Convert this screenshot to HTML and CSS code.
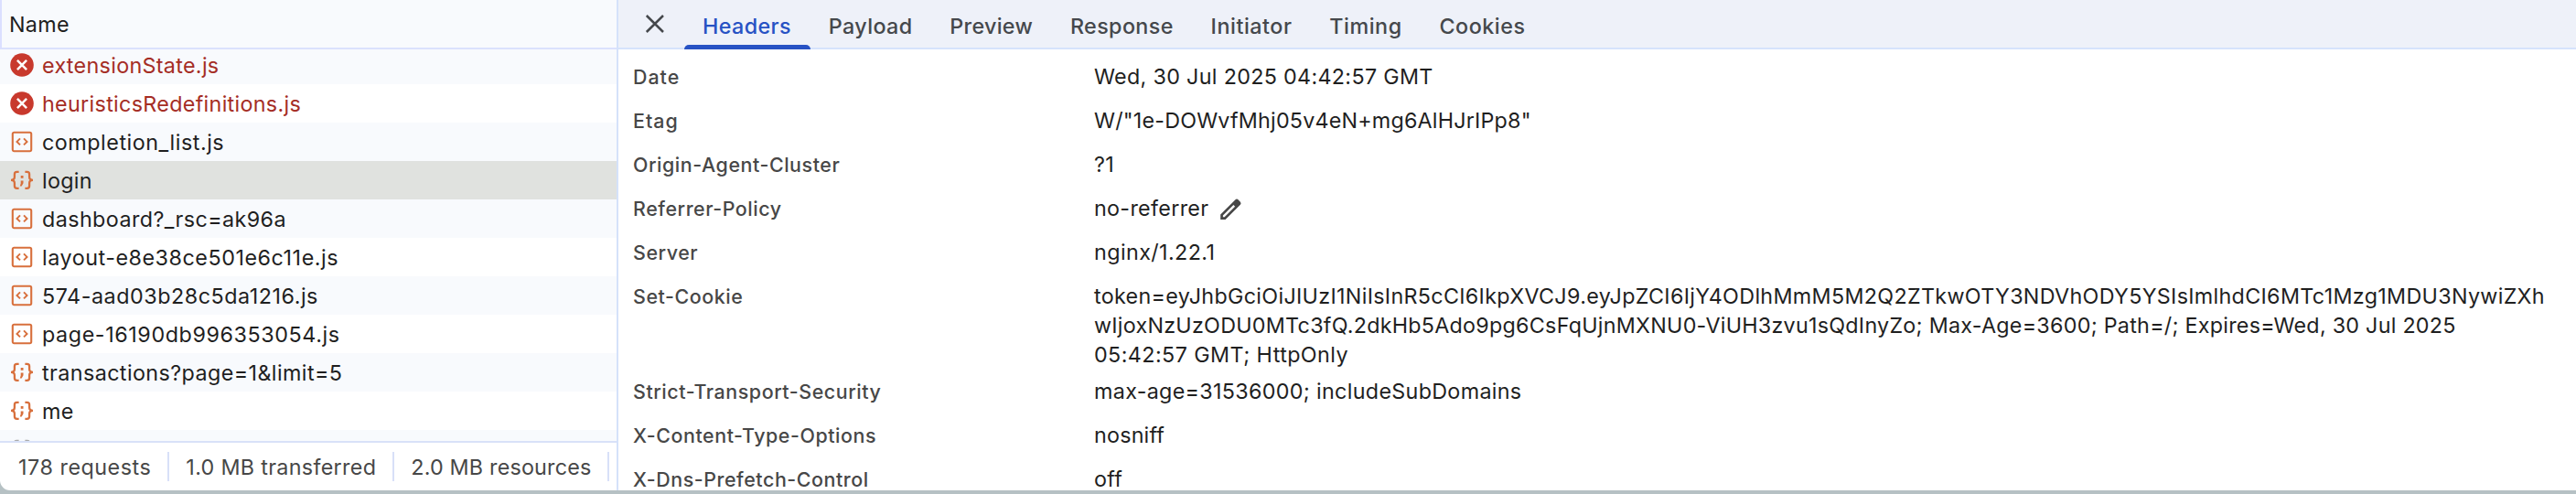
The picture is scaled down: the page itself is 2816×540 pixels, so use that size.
FILE: index.html
```html
<!DOCTYPE html>
<html lang="en">
<head>
  <meta charset="UTF-8">
  <meta name="viewport" content="width=device-width, initial-scale=1.0">
  <title>Network - DevTools</title>
  <link rel="stylesheet" href="styles.css">
</head>
<body>
  <!-- Icon definitions -->
  <svg class="defs" width="0" height="0">
    <symbol id="icon-error" viewBox="0 0 26 26">
      <circle cx="13" cy="13" r="12.8" fill="#c8392d"/>
      <path d="M7.9 7.9l10.2 10.2M18.1 7.9L7.9 18.1" stroke="#fff" stroke-width="2.5" fill="none"/>
    </symbol>
    <symbol id="icon-script" viewBox="0 0 26 26">
      <rect x="2.8" y="2.8" width="20.4" height="20.4" rx="1.6" stroke="currentColor" stroke-width="2.1" fill="none"/>
      <path d="M11 9.4L7.5 12.9l3.5 3.5M15 9.4l3.5 3.5-3.5 3.5" stroke="currentColor" stroke-width="2" fill="none"/>
    </symbol>
    <symbol id="icon-json" viewBox="0 0 26 26">
      <path d="M9.6 3.9H7.4Q4.9 3.9 4.9 6.4v3.2Q4.9 12.9 1 12.9q3.9 0 3.9 3.3v3.1q0 2.5 2.5 2.5h2.2M16.4 3.9h2.2q2.5 0 2.5 2.5v3.2q0 3.3 3.9 3.3-3.9 0-3.9 3.3v3.1q0 2.5-2.5 2.5h-2.2" stroke="currentColor" stroke-width="2.3" fill="none"/>
      <rect x="11.7" y="8" width="2.8" height="2.8" fill="currentColor"/>
      <path d="M11.7 13.6h2.8v2.6l-1.8 3.4h-1.9l.9-3z" fill="currentColor"/>
    </symbol>
  </svg>

  <div class="devtools">
    <div class="requests">
      <div class="requests-header">Name</div>
      <ul class="request-list">
        <li class="request failed"><svg class="icon"><use href="#icon-error"/></svg><span>extensionState.js</span></li>
        <li class="request failed"><svg class="icon"><use href="#icon-error"/></svg><span>heuristicsRedefinitions.js</span></li>
        <li class="request"><svg class="icon"><use href="#icon-script"/></svg><span class="loose">completion_list.js</span></li>
        <li class="request selected"><svg class="icon"><use href="#icon-json"/></svg><span>login</span></li>
        <li class="request"><svg class="icon"><use href="#icon-script"/></svg><span class="medium">dashboard?_rsc=ak96a</span></li>
        <li class="request"><svg class="icon"><use href="#icon-script"/></svg><span class="loose">layout-e8e38ce501e6c11e.js</span></li>
        <li class="request"><svg class="icon"><use href="#icon-script"/></svg><span class="loose">574-aad03b28c5da1216.js</span></li>
        <li class="request"><svg class="icon"><use href="#icon-script"/></svg><span class="looser">page-16190db996353054.js</span></li>
        <li class="request"><svg class="icon"><use href="#icon-json"/></svg><span class="medium">transactions?page=1&amp;limit=5</span></li>
        <li class="request"><svg class="icon"><use href="#icon-json"/></svg><span>me</span></li>
        <li class="request pending"><svg class="icon"><use href="#icon-json"/></svg></li>
      </ul>
      <div class="summary">
        <span class="summary-item loose">178 requests</span>
        <span class="summary-item">1.0 MB transferred</span>
        <span class="summary-item tight">2.0 MB resources</span>
      </div>
    </div>

    <div class="details">
      <div class="tabs">
        <button class="close" aria-label="Close">
          <svg width="24" height="24" viewBox="0 0 24 24">
            <path d="M2.8 3l18.2 18M21 3L2.8 21" stroke="#45484c" stroke-width="2.5" fill="none"/>
          </svg>
        </button>
        <div class="tab active">Headers</div>
        <div class="tab">Payload</div>
        <div class="tab preview">Preview</div>
        <div class="tab">Response</div>
        <div class="tab loose">Initiator</div>
        <div class="tab loose">Timing</div>
        <div class="tab loose">Cookies</div>
      </div>

      <div class="headers">
        <div class="header-row">
          <div class="header-name short">Date</div>
          <div class="header-value">Wed, 30 Jul 2025 04:42:57 GMT</div>
        </div>
        <div class="header-row">
          <div class="header-name short">Etag</div>
          <div class="header-value tight">W/"1e-DOWvfMhj05v4eN+mg6AlHJrIPp8"</div>
        </div>
        <div class="header-row">
          <div class="header-name">Origin-Agent-Cluster</div>
          <div class="header-value">?1</div>
        </div>
        <div class="header-row">
          <div class="header-name">Referrer-Policy</div>
          <div class="header-value editable">
            no-referrer
            <svg class="edit" width="26" height="26" viewBox="0 0 26 26">
              <path d="M2.2 24v-5.4L18.5 2.3q1.5-1.4 3 0l2.4 2.4q1.4 1.5 0 3L7.6 24zM4.9 21.3h1.7L18.1 9.8l-1.7-1.7L4.9 19.6z" fill="#474747" fill-rule="evenodd"/>
            </svg>
          </div>
        </div>
        <div class="header-row">
          <div class="header-name">Server</div>
          <div class="header-value medium">nginx/1.22.1</div>
        </div>
        <div class="header-row">
          <div class="header-name">Set-Cookie</div>
          <div class="header-value">
            token=eyJhbGciOiJIUzI1NiIsInR5cCI6IkpXVCJ9.eyJpZCI6IjY4ODlhMmM5M2Q2ZTkwOTY3NDVhODY5YSIsImlhdCI6MTc1Mzg1MDU3NywiZXh<br>
            <span class="snug">wIjoxNzUzODU0MTc3fQ.2dkHb5Ado9pg6CsFqUjnMXNU0-ViUH3zvu1sQdInyZo; Max-Age=3600; Path=/; Expires=Wed, 30 Jul 2025</span><br>
            <span class="medium">05:42:57 GMT; HttpOnly</span>
          </div>
        </div>
        <div class="header-row">
          <div class="header-name">Strict-Transport-Security</div>
          <div class="header-value">max-age=31536000; includeSubDomains</div>
        </div>
        <div class="header-row">
          <div class="header-name">X-Content-Type-Options</div>
          <div class="header-value tight">nosniff</div>
        </div>
        <div class="header-row">
          <div class="header-name">X-Dns-Prefetch-Control</div>
          <div class="header-value">off</div>
        </div>
      </div>
    </div>
  </div>
</body>
</html>
```
FILE: styles.css
```css
* {
  margin: 0;
  padding: 0;
  box-sizing: border-box;
}

body {
  font-family: Inter, Roboto, sans-serif;
  font-size: 23.3px;
  letter-spacing: 0.32px;
  color: #1f1f1f;
  background: #b6c1c4;
  height: 540px;
  overflow: hidden;
}

.defs {
  display: block;
}

.devtools {
  display: flex;
  height: 536px;
  background: #fff;
  border-bottom-left-radius: 11px;
  overflow: hidden;
}

/* Request list */
.requests {
  display: flex;
  flex-direction: column;
  width: 676px;
  flex-shrink: 0;
  border-right: 2px solid #d5e2fa;
}

.requests-header {
  height: 54px;
  flex-shrink: 0;
  line-height: 54px;
  padding-left: 8px;
  background: #f8fafd;
  border-left: 2px solid #dbdfff;
  border-bottom: 2px solid #dbe1fd;
}

.request-list {
  flex: 1;
  min-height: 0;
  list-style: none;
  overflow: hidden;
}

.request {
  display: flex;
  align-items: center;
  gap: 9px;
  height: 42px;
  padding-left: 11px;
  white-space: nowrap;
}

.request span {
  padding-top: 2px;
  line-height: 40px;
}

/* list is scrolled down a little */
.request:first-child {
  margin-top: -4px;
}

.request:nth-child(odd) {
  background: #f8fafd;
}

.request.selected {
  background: #e0e2df;
}

.request.failed {
  color: #a52d25;
}

.icon {
  width: 26px;
  height: 26px;
  flex-shrink: 0;
  color: #d8703d;
}

.pending .icon {
  color: #aaa;
}

.summary {
  display: flex;
  align-items: center;
  height: 54px;
  flex-shrink: 0;
  padding-left: 2px;
  color: #474747;
  border-top: 2px solid #d8e1f8;
}

.summary-item {
  height: 32px;
  line-height: 34px;
  padding: 0 18px;
  white-space: nowrap;
  border-right: 2px solid #d8e0f8;
}

/* Details pane */
.details {
  flex: 1;
  min-width: 0;
}

.tabs {
  display: flex;
  height: 54px;
  padding-left: 28px;
  background: #eef1f9;
  border-bottom: 2px solid #d5e3fc;
}

.close {
  display: flex;
  width: 44px;
  padding-top: 14px;
  border: none;
  background: none;
}

.tab {
  height: 54px;
  line-height: 58px;
  padding: 0 20.8px 0 20px;
  font-weight: 500;
  letter-spacing: 0.4px;
  color: #45484c;
}

.tab.active {
  position: relative;
  color: #2752c4;
}

.tab.active::after {
  content: "";
  position: absolute;
  left: 0;
  right: 0;
  bottom: 0;
  height: 5px;
  background: #2752c4;
  border-radius: 5px 5px 0 0;
}

.tab.preview {
  letter-spacing: 0.3px;
}

.headers {
  padding: 14px 0 0 16px;
  height: 482px;
  overflow: hidden;
}

.header-row {
  display: flex;
  min-height: 48px;
  padding-bottom: 8px;
  line-height: 32px;
}

.header-name {
  width: 504px;
  flex-shrink: 0;
  font-size: 21.4px;
  font-weight: 500;
  letter-spacing: 0.57px;
  color: #474747;
}

.header-name.short {
  letter-spacing: 1px;
}

.header-value {
  white-space: nowrap;
}

.header-value.editable {
  display: flex;
  gap: 11px;
}

.edit {
  margin-top: 4px;
}

/* Tracking */
.tight {
  letter-spacing: 0.2px;
}

.snug {
  letter-spacing: 0.26px;
}

.medium {
  letter-spacing: 0.42px;
}

.loose,
.tab.loose {
  letter-spacing: 0.54px;
}

.looser {
  letter-spacing: 0.6px;
}
```
